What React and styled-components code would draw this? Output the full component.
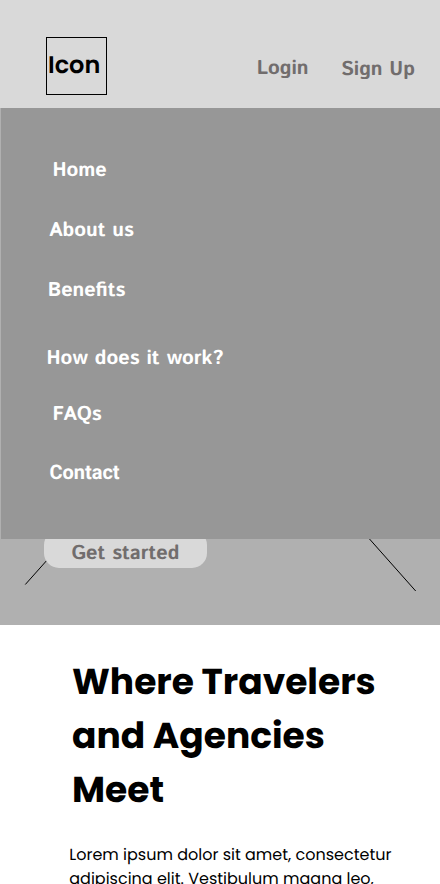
import React from 'react';
import styled, { createGlobalStyle } from 'styled-components';

const GlobalStyle = createGlobalStyle`
  * { box-sizing: border-box; }
  html, body { margin: 0; background: #fff; overflow: hidden; }
`;

const sans = '"Istok Web", "Noto Sans", sans-serif';
const display = 'Poppins, Inter, sans-serif';

const Page = styled.main`
  width: 440px;
  height: 884px;
  overflow: hidden;
  background: #fff;
  font-family: ${display};
  text-rendering: geometricPrecision;
  color: #000;
`;

const Header = styled.header`
  display: flex;
  align-items: flex-start;
  height: 108px;
  padding: 37px 0 0 46px;
  background: #d9d9d9;
`;

const Logo = styled.div`
  width: 61px;
  height: 58px;
  margin-right: 149.7px;
  padding: 10px 0 0 1px;
  border: 1px solid #000;
  font: 600 24px/36px ${display};
`;

const AuthLink = styled.a`
  width: ${(p) => p.$width}px;
  margin-top: ${(p) => p.$top}px;
  font: 700 20px/29px ${sans};
  color: #716d6d;
  white-space: nowrap;
`;

const Menu = styled.nav`
  position: relative;
  z-index: 1;
  display: flex;
  flex-direction: column;
  height: 431px;
  padding-top: 48px;
  background: #979797;
  border-left: 1px solid #b0b0b0;
`;

const MenuLink = styled.a`
  margin: 0 0 ${(p) => p.$gap}px ${(p) => p.$indent}px;
  font: 700 20px/29px ${sans};
  color: #fff;
  white-space: nowrap;
`;

const ContactLink = styled(MenuLink)`
  font-family: Roboto, sans-serif;
`;

const Hero = styled.section`
  position: relative;
  display: flex;
  align-items: flex-start;
  height: 86px;
  padding-left: 44px;
  background: #b0b0b0;
`;

const Cross = styled.svg`
  position: absolute;
  inset: 0;
`;

const Cta = styled.div`
  position: relative;
  width: 163px;
  height: 38px;
  margin-top: -9px;
  padding: 9px 0 0 27.4px;
  border-radius: 15px;
  background: #d9d9d9;
  font: 700 20px/29px ${sans};
  color: #716d6d;
  white-space: nowrap;
`;

const Title = styled.h1`
  width: 320px;
  margin: 30px 0 0 72px;
  font: 700 36px/54px ${display};
`;

const Copy = styled.p`
  width: 340px;
  margin: 26px 0 0 69.3px;
  font: 400 16px/24px ${display};
`;

const links = [
  { label: 'Home', indent: 51.4, gap: 31 },
  { label: 'About us', indent: 48, gap: 31 },
  { label: 'Benefits', indent: 46.7, gap: 39 },
  { label: 'How does it work?', indent: 45.5, gap: 27 },
  { label: 'FAQs', indent: 51.4, gap: 29 },
];

export default function App() {
  return (
    <Page>
      <GlobalStyle />
      <Header>
        <Logo>Icon</Logo>
        <AuthLink $top={17} $width={84.3}>Login</AuthLink>
        <AuthLink $top={18} $width={80}>Sign Up</AuthLink>
      </Header>
      <Menu>
        {links.map((l) => (
          <MenuLink key={l.label} $indent={l.indent} $gap={l.gap}>{l.label}</MenuLink>
        ))}
        <ContactLink $indent={48.4} $gap={0}>Contact</ContactLink>
      </Menu>
      <Hero>
        <Cross width="440" height="86" viewBox="0 0 440 86" fill="none" stroke="#000" strokeWidth="1">
          <path d="M25.3 45.5L65 1" />
          <path d="M369.5 0L415.7 52" />
        </Cross>
        <Cta>Get started</Cta>
      </Hero>
      <Title>Where Travelers and Agencies Meet</Title>
      <Copy>Lorem ipsum dolor sit amet, consectetur adipiscing elit. Vestibulum magna leo,</Copy>
    </Page>
  );
}
